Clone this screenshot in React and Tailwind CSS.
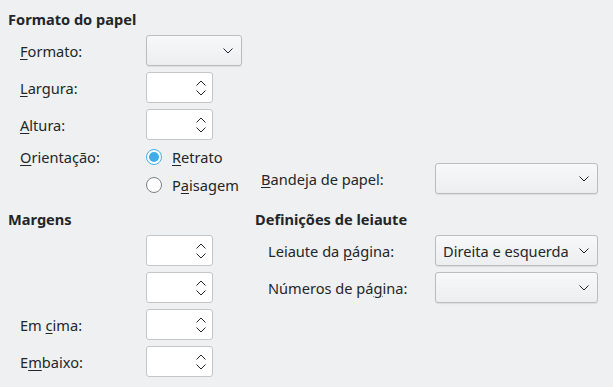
import React from 'react';

const Chevron = ({ up = false }) => (
  <svg width="10" height="6" viewBox="0 0 10 6" className="block">
    <path
      d={up ? 'M0.5 5.5 L5 1 L9.5 5.5' : 'M0.5 0.5 L5 5 L9.5 0.5'}
      fill="none"
      stroke="#232629"
      strokeWidth="1"
    />
  </svg>
);

const Mn = ({ children }) => <u className="underline decoration-1 underline-offset-[2px]">{children}</u>;

const Combo = ({ width, value }) => (
  <div
    className={`${width} h-[31px] flex items-center justify-between pl-[7px] pr-[8px] rounded-[3px] border border-[#babcbe] bg-gradient-to-b from-[#f8f8f9] to-[#eceef0] shadow-[0_1px_1px_rgba(0,0,0,0.08)]`}
  >
    <span>{value}</span>
    <Chevron />
  </div>
);

const Spin = () => (
  <div className="w-[67px] h-[31px] flex items-center justify-end pr-[6px] rounded-[3px] border border-[#c3c5c7] bg-white">
    <div className="flex flex-col gap-[4px]">
      <Chevron up />
      <Chevron />
    </div>
  </div>
);

const Row = ({ label, children, labelWidth = 'w-[138px]', pad = 'pl-3', className = '' }) => (
  <div className={`flex items-center h-[31px] ${className}`}>
    <div className={`${labelWidth} ${pad} shrink-0 whitespace-nowrap`}>{label}</div>
    {children}
  </div>
);

const Radio = ({ checked, children }) => (
  <div className="flex items-center h-[22px]">
    {checked ? (
      <span className="w-[16px] h-[16px] rounded-full border border-[#3daee9] bg-white flex items-center justify-center">
        <span className="w-[10px] h-[10px] rounded-full bg-[#3daee9]" />
      </span>
    ) : (
      <span className="w-[16px] h-[16px] rounded-full border border-[#7d8082] bg-white" />
    )}
    <span className="ml-[10px] whitespace-nowrap">{children}</span>
  </div>
);

export default function App() {
  return (
    <div
      className="w-[613px] h-[387px] bg-[#eff0f1] text-[#232629] text-[14.6px] leading-[18px] overflow-hidden"
      style={{ fontFamily: '"Noto Sans", sans-serif' }}
    >
      <div className="pl-2 pt-[10px]">
        <div className="font-bold">Formato do papel</div>
        <div className="mt-[7px] flex flex-col gap-[6px]">
          <Row label={<><Mn>F</Mn>ormato:</>}>
            <Combo width="w-[96px]" />
          </Row>
          <Row label={<><Mn>L</Mn>argura:</>}>
            <Spin />
          </Row>
          <Row label={<><Mn>A</Mn>ltura:</>}>
            <Spin />
          </Row>
        </div>
        <div className="flex items-end mt-[6px]">
          <div className="w-[138px] pl-3 shrink-0 self-start h-[22px] flex items-center">
            <span><Mn>O</Mn>rientação:</span>
          </div>
          <div className="w-[115px] shrink-0 flex flex-col gap-[6px]">
            <Radio checked><Mn>R</Mn>etrato</Radio>
            <Radio>P<Mn>a</Mn>isagem</Radio>
          </div>
          <div className="flex items-center mb-[2px]">
            <div className="w-[174px] shrink-0"><Mn>B</Mn>andeja de papel:</div>
            <Combo width="w-[163px]" />
          </div>
        </div>
      </div>

      <div className="flex pl-2 mt-[14px]">
        <div className="w-[247px] shrink-0">
          <div className="font-bold">Margens</div>
          <div className="mt-[7px] flex flex-col gap-[6px]">
            <Row label="">
              <Spin />
            </Row>
            <Row label="">
              <Spin />
            </Row>
            <Row label={<>Em <Mn>c</Mn>ima:</>}>
              <Spin />
            </Row>
            <Row label={<>E<Mn>m</Mn>baixo:</>}>
              <Spin />
            </Row>
          </div>
        </div>
        <div>
          <div className="font-bold">Definições de leiaute</div>
          <div className="mt-[7px] flex flex-col gap-[6px]">
            <Row label={<>Leiaute da <Mn>p</Mn>ágina:</>} labelWidth="w-[180px]" pad="pl-[13px]">
              <Combo width="w-[163px]" value="Direita e esquerda" />
            </Row>
            <Row label={<>Números de pá<Mn>g</Mn>ina:</>} labelWidth="w-[180px]" pad="pl-[13px]">
              <Combo width="w-[163px]" />
            </Row>
          </div>
        </div>
      </div>
    </div>
  );
}
